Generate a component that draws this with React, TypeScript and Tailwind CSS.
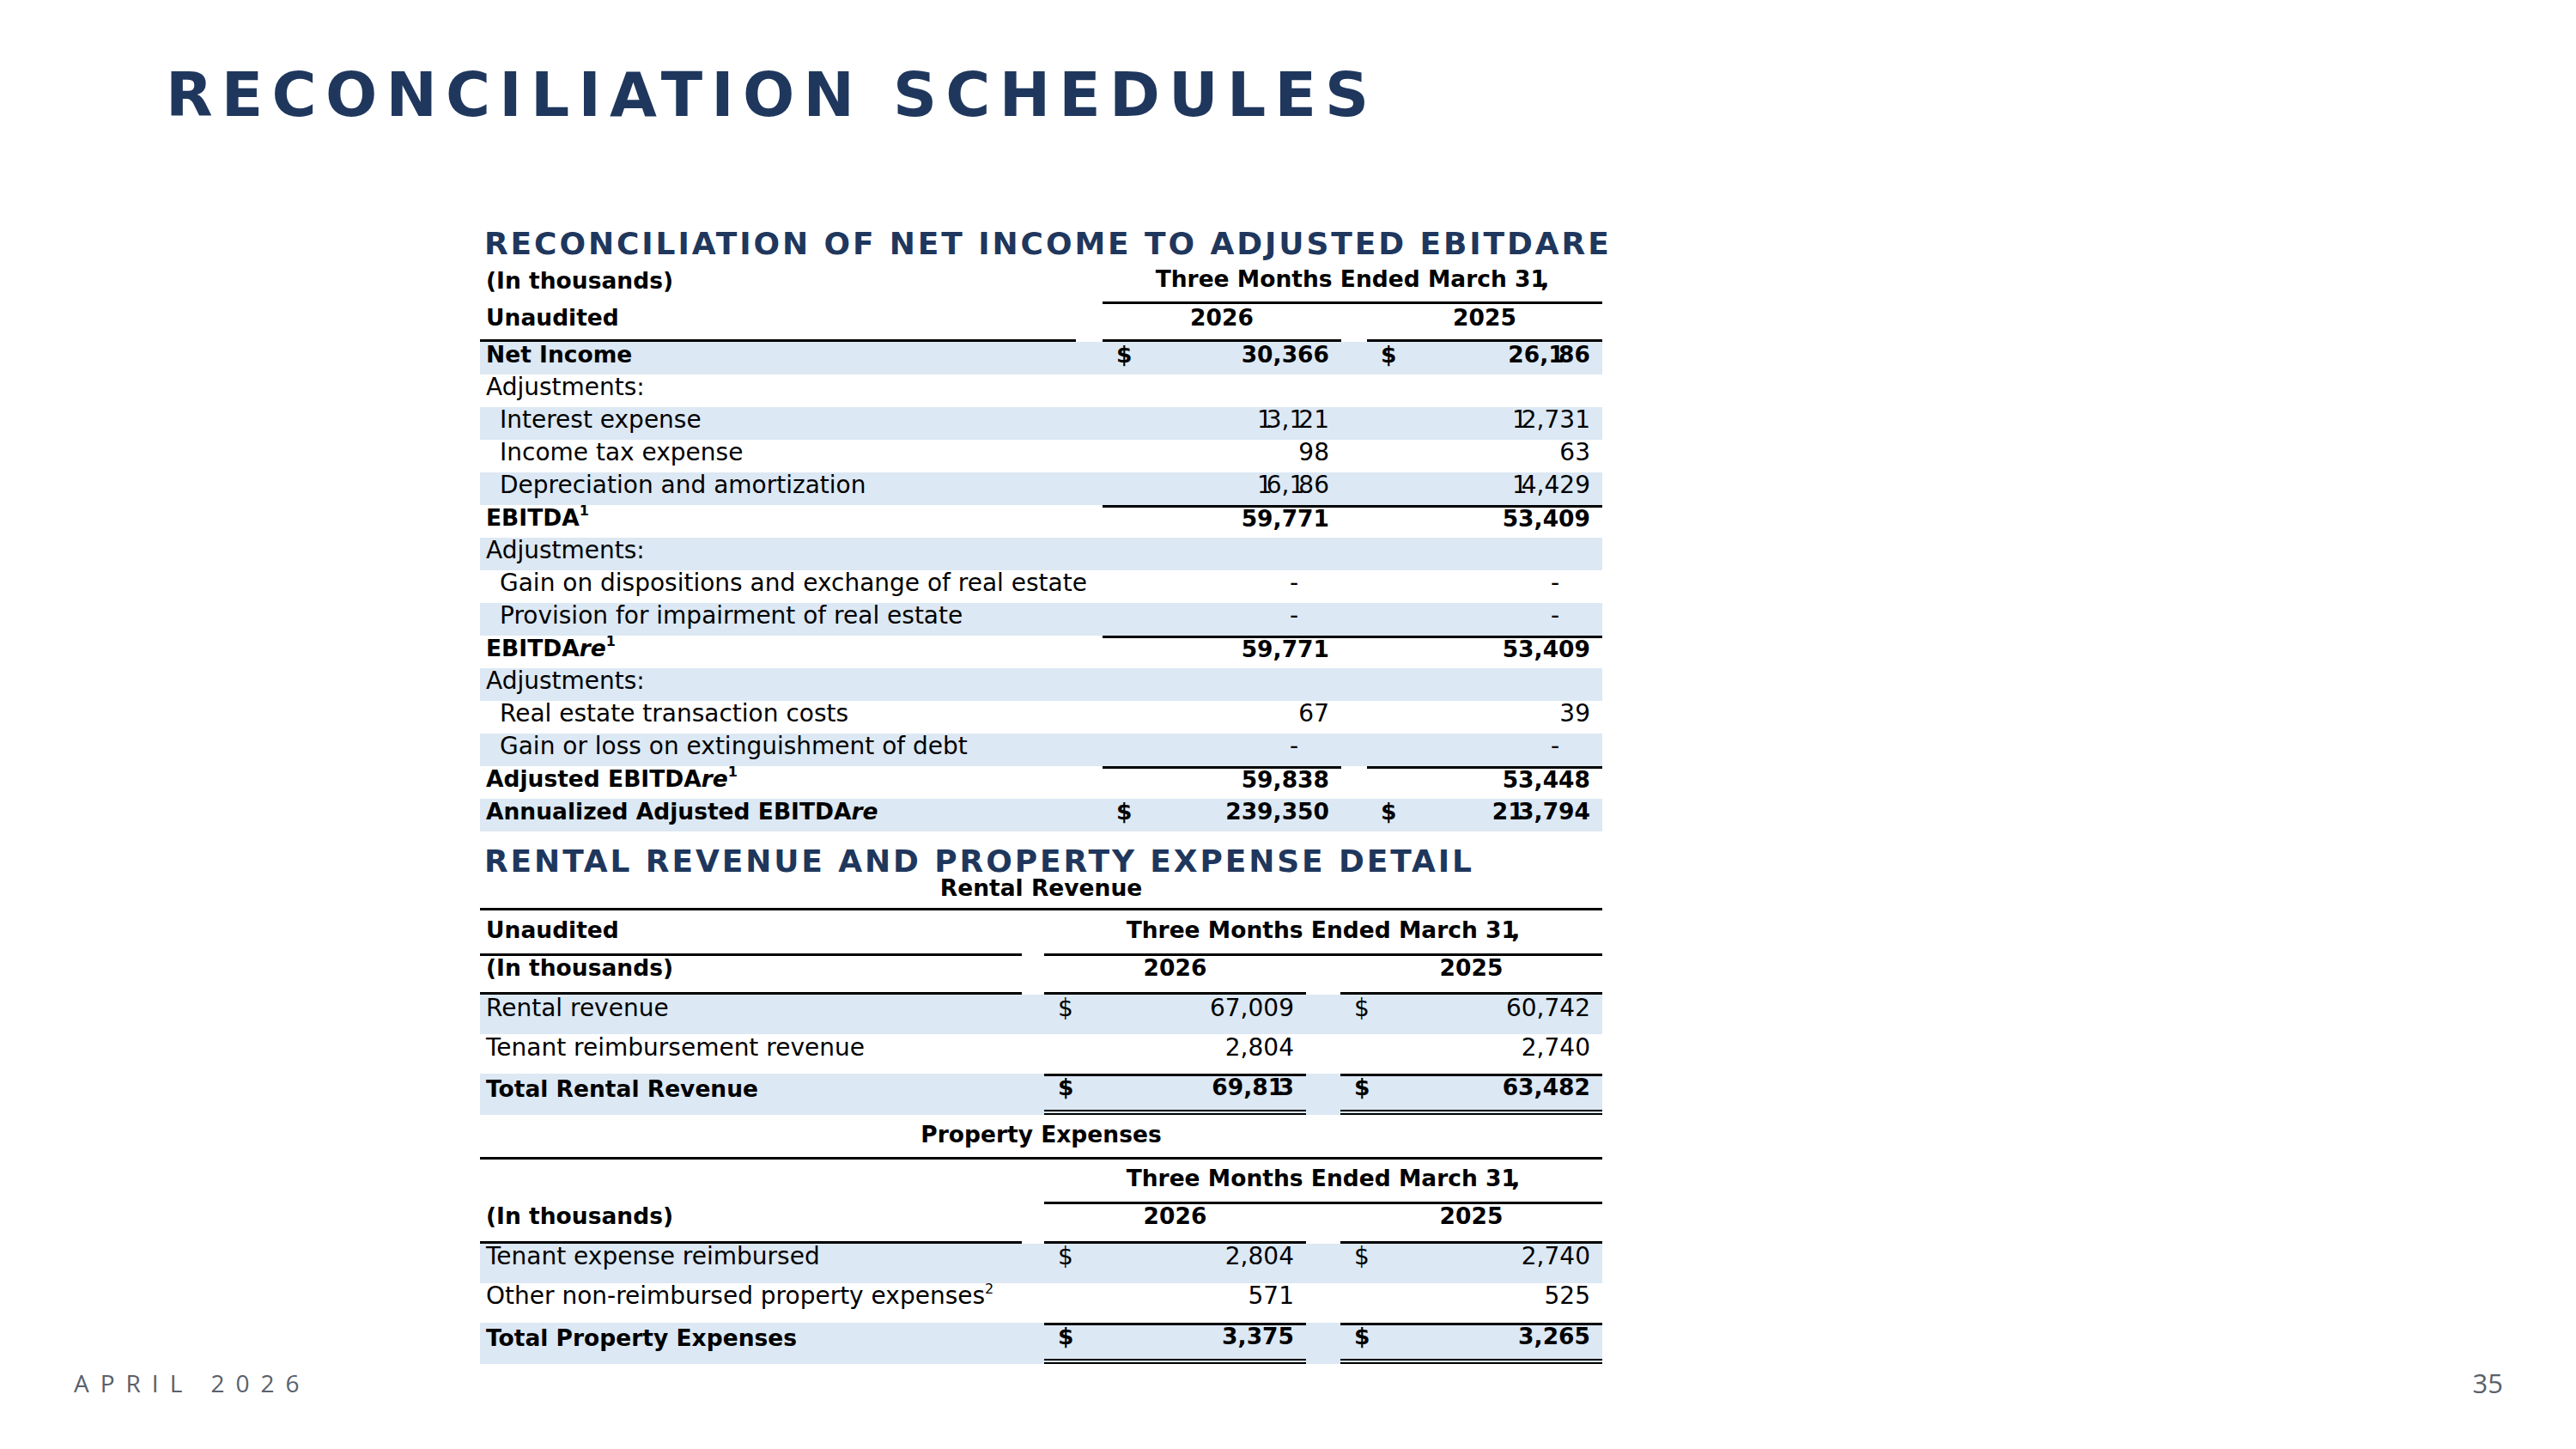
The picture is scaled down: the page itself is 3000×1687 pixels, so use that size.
import React from 'react';
import clsx from 'clsx';

type Cols = { label: string; gap: string; vals: string; c1: string; gap2: string; c2: string };

const T1: Cols = { label: 'w-[694px]', gap: 'w-[31px]', vals: 'w-[582px]', c1: 'w-[278px]', gap2: 'w-[30px]', c2: 'w-[274px]' };
const T2: Cols = { label: 'w-[631px]', gap: 'w-[26px]', vals: 'w-[650px]', c1: 'w-[305px]', gap2: 'w-[40px]', c2: 'w-[305px]' };

const BLUE = 'bg-[#dce8f4]';
const BOLD = 'text-[26.5px] font-bold';
const REG = 'text-[28px]';

function Num({ v }: { v: string }) {
  const chars = v.split('');
  return (
    <>
      {chars.map((c, i) =>
        c === '1' && i < chars.length - 1 ? (
          <span key={i} className="tracking-[-0.25em]">1</span>
        ) : (
          <React.Fragment key={i}>{c}</React.Fragment>
        )
      )}
    </>
  );
}

type R = {
  label: React.ReactNode;
  bold?: boolean;
  indent?: boolean;
  bg?: boolean;
  dollar?: boolean;
  v1?: string;
  v2?: string;
  top?: 'full' | 'split';
  dbl?: boolean;
};

function Val({ w, v, dollar, split, dbl, pb }: { w: string; v?: string; dollar?: boolean; split?: boolean; dbl?: boolean; pb: string }) {
  return (
    <div className={clsx(w, 'flex flex-col', split && 'border-t-[3px] border-black')}>
      <div className={clsx('flex-1 flex items-center pl-[16px] pr-[14px]', dollar ? 'justify-between' : 'justify-end', pb)}>
        {dollar && <span>$</span>}
        {v && (v === '-' ? <span className="pr-[36px]">-</span> : <span><Num v={v} /></span>)}
      </div>
      {dbl && <div className="h-[6px] border-y-2 border-black" />}
    </div>
  );
}

function DataRow({ r, cols, h, pb }: { r: R; cols: Cols; h: string; pb: string }) {
  return (
    <div className={clsx('flex', h, r.bg && BLUE, r.bold ? BOLD : REG)}>
      <div className={clsx(cols.label, 'flex items-center whitespace-nowrap', r.indent ? 'pl-[23px]' : 'pl-[7px]', pb)}>{r.label}</div>
      <div className={cols.gap} />
      <div className={clsx(cols.vals, 'flex', r.top === 'full' && 'border-t-[3px] border-black')}>
        <Val w={cols.c1} v={r.v1} dollar={r.dollar} split={r.top === 'split'} dbl={r.dbl} pb={pb} />
        <div className={cols.gap2} />
        <Val w={cols.c2} v={r.v2} dollar={r.dollar} split={r.top === 'split'} dbl={r.dbl} pb={pb} />
      </div>
    </div>
  );
}

const Sup = ({ n }: { n: string }) => <sup className="text-[16px]">{n}</sup>;
const EbRe = () => (
  <>
    EBITDA<span className="italic">re</span>
  </>
);

const table1: R[] = [
  { label: 'Net Income', bold: true, bg: true, dollar: true, v1: '30,366', v2: '26,186' },
  { label: 'Adjustments:' },
  { label: 'Interest expense', indent: true, bg: true, v1: '13,121', v2: '12,731' },
  { label: 'Income tax expense', indent: true, v1: '98', v2: '63' },
  { label: 'Depreciation and amortization', indent: true, bg: true, v1: '16,186', v2: '14,429' },
  { label: <>EBITDA<Sup n="1" /></>, bold: true, top: 'full', v1: '59,771', v2: '53,409' },
  { label: 'Adjustments:', bg: true },
  { label: 'Gain on dispositions and exchange of real estate', indent: true, v1: '-', v2: '-' },
  { label: 'Provision for impairment of real estate', indent: true, bg: true, v1: '-', v2: '-' },
  { label: <><EbRe /><Sup n="1" /></>, bold: true, top: 'full', v1: '59,771', v2: '53,409' },
  { label: 'Adjustments:', bg: true },
  { label: 'Real estate transaction costs', indent: true, v1: '67', v2: '39' },
  { label: 'Gain or loss on extinguishment of debt', indent: true, bg: true, v1: '-', v2: '-' },
  { label: <>Adjusted <EbRe /><Sup n="1" /></>, bold: true, top: 'split', dbl: true, v1: '59,838', v2: '53,448' },
  { label: <>Annualized Adjusted <EbRe /></>, bold: true, bg: true, dollar: true, v1: '239,350', v2: '213,794' },
];

const rental: R[] = [
  { label: 'Rental revenue', bg: true, dollar: true, v1: '67,009', v2: '60,742' },
  { label: 'Tenant reimbursement revenue', v1: '2,804', v2: '2,740' },
];
const rentalTotal: R = { label: 'Total Rental Revenue', bold: true, bg: true, dollar: true, top: 'split', dbl: true, v1: '69,813', v2: '63,482' };

const prop: R[] = [
  { label: 'Tenant expense reimbursed', bg: true, dollar: true, v1: '2,804', v2: '2,740' },
  { label: <>Other non-reimbursed property expenses<Sup n="2" /></>, v1: '571', v2: '525' },
];
const propTotal: R = { label: 'Total Property Expenses', bold: true, bg: true, dollar: true, top: 'split', dbl: true, v1: '3,375', v2: '3,265' };

function SectionTitle({ children, mt }: { children: React.ReactNode; mt: string }) {
  return (
    <div className={clsx(mt, 'ml-[5px] h-[34px] text-[36px] font-bold tracking-[2.9px] text-[#1f375d] whitespace-nowrap leading-none')}>
      {children}
    </div>
  );
}

const THREE = <>Three Months Ended March 3<Num v="1," /></>;

export default function App() {
  return (
    <div className="w-[3000px] h-[1687px] bg-white flex flex-col leading-none text-black font-['DejaVu_Sans',sans-serif]">
      <h1 className="mt-[75px] ml-[193px] h-[71px] text-[71px] font-bold tracking-[10.2px] text-[#1f375d] leading-none whitespace-nowrap">
        RECONCILIATION SCHEDULES
      </h1>

      <div className="ml-[559px] w-[1307px] flex flex-col">
        <SectionTitle mt="mt-[120px]">RECONCILIATION OF NET INCOME TO ADJUSTED EBITDARE</SectionTitle>

        {/* table 1 header */}
        <div className={clsx('flex h-[54px]', BOLD)}>
          <div className={clsx(T1.label, 'flex items-center pl-[7px]')}>(In thousands)</div>
          <div className={T1.gap} />
          <div className={clsx(T1.vals, 'flex items-center justify-center border-b-[3px] border-black')}>{THREE}</div>
        </div>
        <div className={clsx('flex h-[44px]', BOLD)}>
          <div className={clsx(T1.label, 'flex items-center pl-[7px] pb-[9px] border-b-[3px] border-black')}>Unaudited</div>
          <div className={T1.gap} />
          <div className={clsx(T1.vals, 'flex')}>
            <div className={clsx(T1.c1, 'flex items-center justify-center pb-[9px] border-b-[3px] border-black')}>2026</div>
            <div className={T1.gap2} />
            <div className={clsx(T1.c2, 'flex items-center justify-center pb-[9px] border-b-[3px] border-black')}>2025</div>
          </div>
        </div>
        {table1.map((r, i) => (
          <DataRow key={i} r={r} cols={T1} h="h-[38px]" pb="pb-[8px]" />
        ))}

        <SectionTitle mt="mt-[17px]">RENTAL REVENUE AND PROPERTY EXPENSE DETAIL</SectionTitle>

        {/* Rental revenue */}
        <div className={clsx('flex h-[41px] items-center justify-center pb-[8px] border-b-[3px] border-black', BOLD)}>Rental Revenue</div>
        <div className={clsx('flex h-[53px]', BOLD)}>
          <div className={clsx(T2.label, 'flex items-center pl-[7px] pb-[4px] border-b-[3px] border-black')}>Unaudited</div>
          <div className={T2.gap} />
          <div className={clsx(T2.vals, 'flex items-center justify-center pb-[4px] border-b-[3px] border-black')}>{THREE}</div>
        </div>
        <div className={clsx('flex h-[45px]', BOLD)}>
          <div className={clsx(T2.label, 'flex items-center pl-[7px] pb-[14px] border-b-[3px] border-black')}>(In thousands)</div>
          <div className={T2.gap} />
          <div className={clsx(T2.vals, 'flex')}>
            <div className={clsx(T2.c1, 'flex items-center justify-center pb-[14px] border-b-[3px] border-black')}>2026</div>
            <div className={T2.gap2} />
            <div className={clsx(T2.c2, 'flex items-center justify-center pb-[14px] border-b-[3px] border-black')}>2025</div>
          </div>
        </div>
        {rental.map((r, i) => (
          <DataRow key={i} r={r} cols={T2} h="h-[46px]" pb="pb-[14px]" />
        ))}
        <DataRow r={rentalTotal} cols={T2} h="h-[48px]" pb="pb-[12px]" />

        {/* Property expenses */}
        <div className={clsx('flex h-[52px] items-center justify-center pb-[3px] border-b-[3px] border-black', BOLD)}>Property Expenses</div>
        <div className={clsx('flex h-[52px]', BOLD)}>
          <div className={T2.label} />
          <div className={T2.gap} />
          <div className={clsx(T2.vals, 'flex items-center justify-center pb-[5px] border-b-[3px] border-black')}>{THREE}</div>
        </div>
        <div className={clsx('flex h-[46px]', BOLD)}>
          <div className={clsx(T2.label, 'flex items-center pl-[7px] pb-[15px] border-b-[3px] border-black')}>(In thousands)</div>
          <div className={T2.gap} />
          <div className={clsx(T2.vals, 'flex')}>
            <div className={clsx(T2.c1, 'flex items-center justify-center pb-[15px] border-b-[3px] border-black')}>2026</div>
            <div className={T2.gap2} />
            <div className={clsx(T2.c2, 'flex items-center justify-center pb-[15px] border-b-[3px] border-black')}>2025</div>
          </div>
        </div>
        {prop.map((r, i) => (
          <DataRow key={i} r={r} cols={T2} h="h-[46px]" pb="pb-[16px]" />
        ))}
        <DataRow r={propTotal} cols={T2} h="h-[48px]" pb="pb-[12px]" />
      </div>

      <footer className="mt-auto mb-[57px] h-[40px] flex items-center justify-between pl-[86px] pr-[85px] font-['Open_Sans',sans-serif] font-normal text-[#5a616b]">
        <span className="text-[28px] tracking-[13px]">APRIL 2026</span>
        <span className="text-[31px]">35</span>
      </footer>
    </div>
  );
}
